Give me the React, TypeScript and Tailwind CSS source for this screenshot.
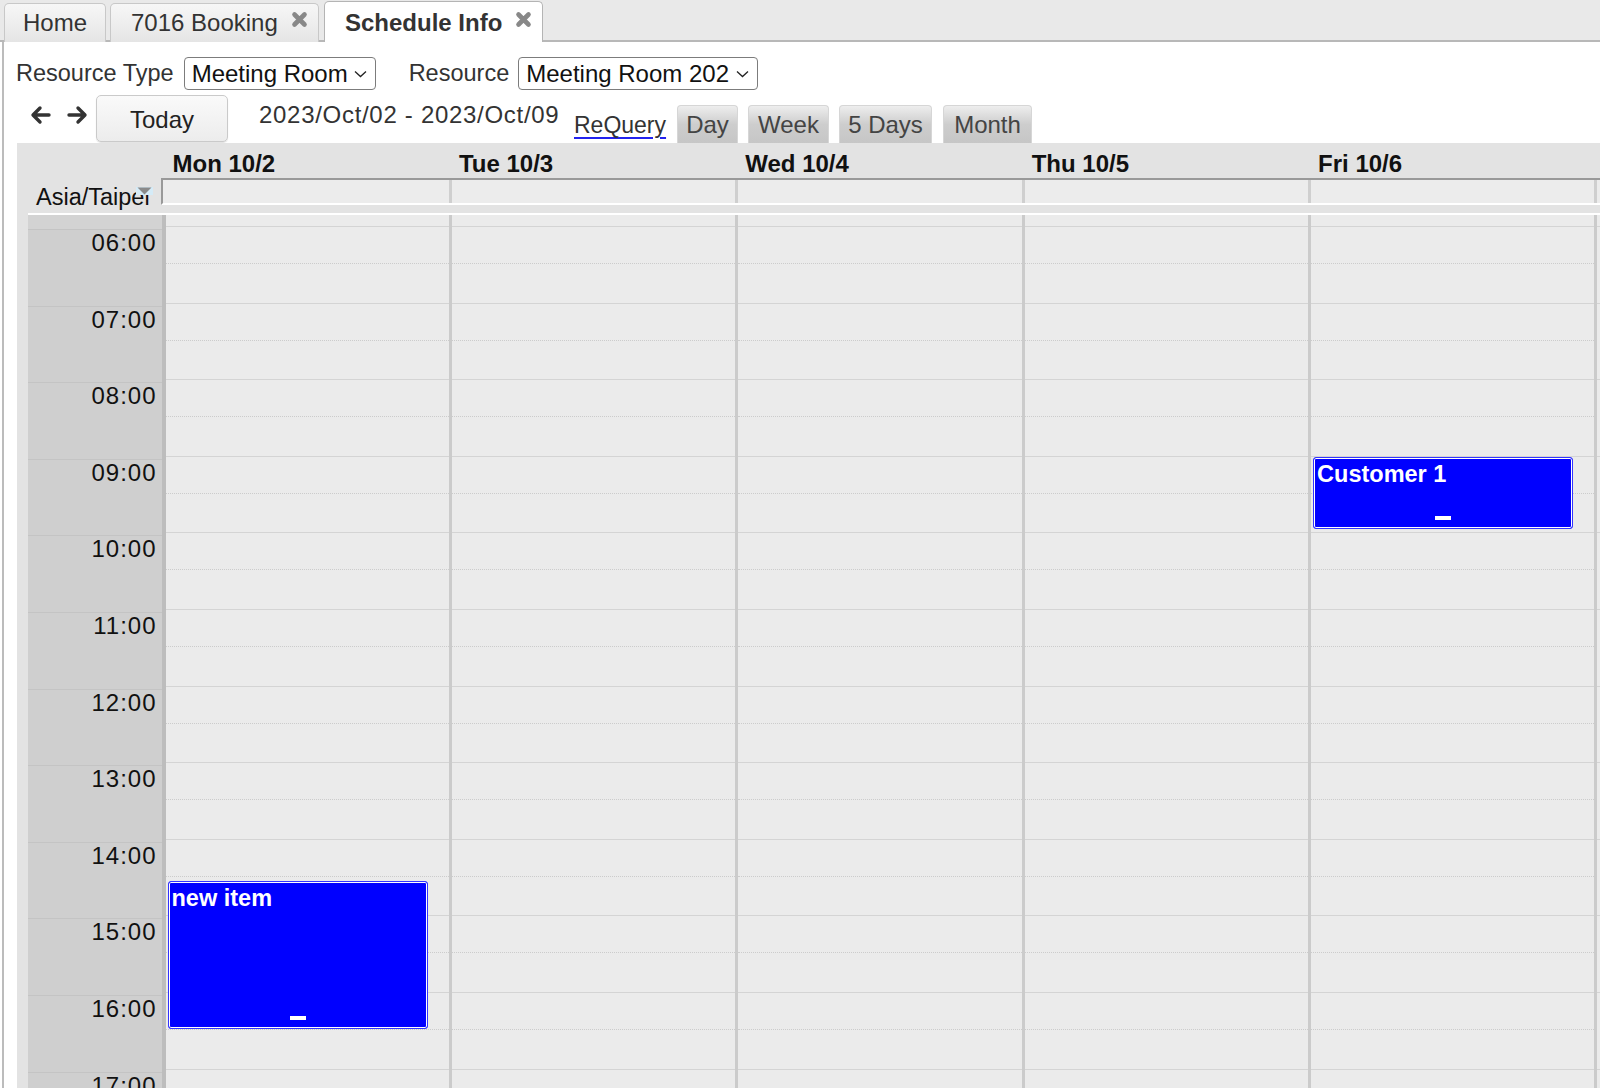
import React from 'react';

const DAYS = ['Mon 10/2', 'Tue 10/3', 'Wed 10/4', 'Thu 10/5', 'Fri 10/6'];
const HOURS = ['06:00', '07:00', '08:00', '09:00', '10:00', '11:00', '12:00', '13:00', '14:00', '15:00', '16:00', '17:00'];

function Arrow({ dir }: { dir: 'left' | 'right' }) {
  const d = dir === 'left' ? 'M10 3 L3 10 L10 17 M4 10 H19' : 'M12 3 L19 10 L12 17 M18 10 H3';
  return (
    <svg width="22" height="20" viewBox="0 0 22 20" className="shrink-0">
      <path d={d} stroke="#333" strokeWidth="3.4" fill="none" strokeLinecap="round" strokeLinejoin="round" />
    </svg>
  );
}

function Chevron() {
  return (
    <svg width="13" height="8" viewBox="0 0 13 8" className="shrink-0">
      <path d="M1 1.5 L6.5 6.5 L12 1.5" stroke="#222" strokeWidth="1.3" fill="none" />
    </svg>
  );
}

function Select({ value, w }: { value: string; w: string }) {
  return (
    <div className={`${w} h-[33px] border border-[#7c7c7c] rounded-[4px] flex items-center justify-between pl-[7px] pr-[8px] text-[24px] text-[#111] bg-white`}>
      <span>{value}</span>
      <Chevron />
    </div>
  );
}

function Close() {
  return (
    <svg width="17" height="17" viewBox="0 0 17 17" className="ml-[13px] self-start mt-[7px] shrink-0">
      <path d="M3.5 3.5 L13.5 13.5 M13.5 3.5 L3.5 13.5" stroke="#888888" strokeWidth="4.6" strokeLinecap="round" />
    </svg>
  );
}

function ViewTab({ label, w }: { label: string; w: string }) {
  return (
    <div className={`${w} h-[38px] mt-[10px] rounded-t-[4px] border border-b-0 border-[#d6d6d6] bg-linear-to-b from-[#eeeeee] via-[#cdcdcd] to-[#c6c6c6] flex items-center justify-center text-[24px] text-[#444]`}>
      {label}
    </div>
  );
}

function Event({ title, top, h }: { title: string; top: string; h: string }) {
  return (
    <div className={`absolute left-[2px] w-[260px] ${top} ${h} bg-[#0000ff] border border-[#3333ff] rounded-[3px] shadow-[inset_0_0_0_1px_#ffffff] pl-[3px] pt-[2px]`}>
      <div className="text-white font-bold text-[23.5px] leading-[28px]">{title}</div>
      <div className="absolute bottom-[8px] left-1/2 -translate-x-1/2 w-[16px] h-[4px] bg-white" />
    </div>
  );
}

export default function App() {
  return (
    <div className="w-[1600px] h-[1088px] overflow-hidden bg-white text-[#222] font-['Liberation_Sans',Arial,sans-serif] flex flex-col">
      {/* tabs */}
      <div className="flex items-end h-[42px] shrink-0 bg-[#e9e9e9] border-b-2 border-[#b8b8b8] pl-[4px] gap-[4px]">
        <div className="w-[102px] h-[39px] -mb-[2px] rounded-t-[5px] border border-b-0 border-[#c8c8c8] bg-linear-to-b from-[#f7f7f7] to-[#e5e5e5] flex items-center justify-center text-[24px] text-[#333]">
          Home
        </div>
        <div className="w-[209px] h-[39px] -mb-[2px] rounded-t-[5px] border border-b-0 border-[#c8c8c8] bg-linear-to-b from-[#f7f7f7] to-[#e5e5e5] flex items-center pl-[20px] text-[24px] text-[#333]">
          7016 Booking
          <Close />
        </div>
        <div className="ml-[1px] w-[219px] h-[41px] -mb-[2px] rounded-t-[5px] border border-b-0 border-[#b4b4b4] bg-white flex items-center pl-[20px] pt-[2px] text-[24px] font-bold text-[#333]">
          Schedule Info
          <Close />
        </div>
      </div>

      {/* body */}
      <div className="flex-1 ml-[2px] border-l-2 border-[#bcbcbc] flex flex-col min-h-0">
        {/* filter row */}
        <div className="flex items-center h-[33px] mt-[15px] pl-[12px] text-[23.5px] text-[#333]">
          <span>Resource Type</span>
          <div className="ml-[10px]">
            <Select value="Meeting Room" w="w-[192px]" />
          </div>
          <span className="ml-[33px]">Resource</span>
          <div className="ml-[9px]">
            <Select value="Meeting Room 202" w="w-[240px]" />
          </div>
        </div>

        {/* toolbar */}
        <div className="flex h-[48px] mt-[5px] shrink-0">
          <div className="ml-[26px] mt-[10px]">
            <Arrow dir="left" />
          </div>
          <div className="ml-[14px] mt-[10px]">
            <Arrow dir="right" />
          </div>
          <button className="ml-[8px] w-[132px] h-[47px] rounded-[5px] border border-[#cacaca] bg-linear-to-b from-[#fafafa] to-[#ececec] shadow-[0_1px_1px_rgba(0,0,0,0.12)] text-[24px] text-[#222] pt-[3px]">
            Today
          </button>
          <div className="ml-[31px] w-[315px] mt-[6px] leading-[28px] text-[24px] tracking-[0.7px] text-[#333]">
            2023/Oct/02 - 2023/Oct/09
          </div>
          <div className="w-[103px] mt-[16px] leading-[28px] text-[23px] text-[#333]">
            <span className="underline decoration-[#2222ee] decoration-2 underline-offset-[4px]">ReQuery</span>
          </div>
          <div className="flex">
            <ViewTab label="Day" w="w-[61px]" />
            <div className="ml-[10px]">
              <ViewTab label="Week" w="w-[81px]" />
            </div>
            <div className="ml-[10px]">
              <ViewTab label="5 Days" w="w-[93px]" />
            </div>
            <div className="ml-[11px]">
              <ViewTab label="Month" w="w-[89px]" />
            </div>
          </div>
        </div>

        {/* calendar */}
        <div className="ml-[13px] flex-1 bg-[#e3e3e3] flex flex-col min-h-0">
          <div className="grid grid-cols-[148.5px_repeat(5,286.4px)_1fr] h-[35px] shrink-0">
            <div />
            {DAYS.map((d) => (
              <div key={d} className="flex items-center pt-[3px] pl-[7px] text-[24px] font-bold text-[#111]">
                {d}
              </div>
            ))}
            <div />
          </div>

          <div className="flex h-[27px] shrink-0">
            <div className="relative w-[144px] pl-[19px] pt-[5px] leading-[28px] text-[23.5px] text-[#111] whitespace-nowrap">
              Asia/Taipei
              <svg width="17" height="8" viewBox="0 0 17 8" className="absolute left-[119px] top-[9px]">
                <rect x="0" y="0" width="17" height="8" fill="#d5ebf7" />
                <path d="M1.5 0.5 H15.5 L8.5 7.5 Z" fill="#8a8a8a" />
              </svg>
            </div>
            <div className="flex-1 border-t-2 border-l-2 border-[#999999] border-b-2 border-b-white bg-[#ececec] pl-[2.5px] grid grid-cols-[repeat(5,286.4px)_1fr]">
              {DAYS.map((d) => (
                <div key={d} className="border-r-[3px] border-[#cfcfcf]" />
              ))}
              <div />
            </div>
          </div>

          <div className="h-[8px] shrink-0" />

          <div className="ml-[11px] flex-1 border-t-2 border-white flex min-h-0">
            {/* gutter */}
            <div className="w-[137.5px] shrink-0 bg-[#cfcfcf] border-r-[4px] border-[#bdbdbd]">
              <div className="h-[14px] bg-[#d3d3d3]" />
              {HOURS.map((h) => (
                <div key={h} className="h-[76.6px] border-t border-[#c4c4c4] pr-[5px] text-right text-[24px] tracking-[1px] leading-[26px] text-[#111]">
                  {h}
                </div>
              ))}
            </div>

            {/* day columns */}
            <div className="flex-1 grid grid-cols-[repeat(5,286.4px)_1fr] bg-[#ebebeb]">
              {DAYS.map((d, i) => (
                <div key={d} className="relative border-r-[3px] border-[#cbcbcb]">
                  <div className="h-[11px]" />
                  {HOURS.map((h) => (
                    <div key={h} className="h-[76.6px] border-t border-[#d4d4d4]">
                      <div className="h-[37px] border-b border-dotted border-[#cccccc]" />
                    </div>
                  ))}
                  {i === 0 && <Event title="new item" top="top-[666px]" h="h-[148px]" />}
                  {i === 4 && <Event title="Customer 1" top="top-[242px]" h="h-[72px]" />}
                </div>
              ))}
              <div>
                <div className="h-[11px]" />
                {HOURS.map((h) => (
                  <div key={h} className="h-[76.6px] border-t border-[#d4d4d4]" />
                ))}
              </div>
            </div>
          </div>
        </div>
      </div>
    </div>
  );
}
